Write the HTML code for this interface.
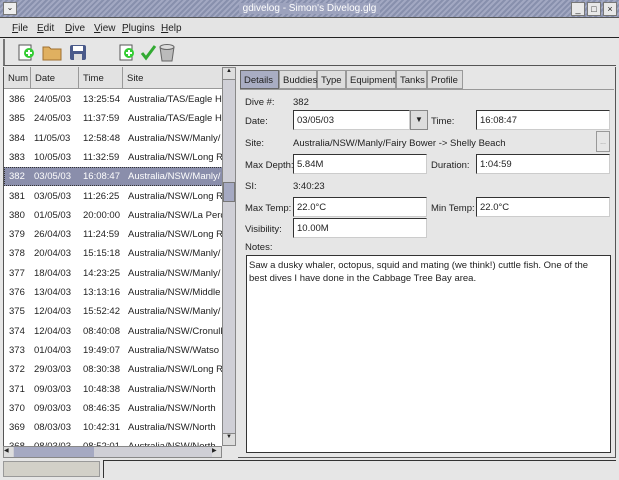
<!DOCTYPE html>
<html><head><meta charset="utf-8"><style>
*{margin:0;padding:0;box-sizing:border-box}
body{width:619px;height:480px;background:#e6e6e6;font-family:"Liberation Sans",sans-serif;font-size:9.5px;color:#222;position:relative;overflow:hidden;white-space:nowrap}
.a{position:absolute}
.title{left:0;top:0;width:619px;height:18px;background:repeating-linear-gradient(135deg,#8890ad 0 2px,#a2a8c2 2px 4px);border-bottom:1px solid #555}
.tt{left:0;width:619px;top:3px;text-align:center;font-size:10px;color:#fff}
.tt span{background:#9ca2bd;padding:0 4px}
.wb{top:2px;width:14px;height:14px;background:#e8e8e8;border:1px solid #777;font-size:9px;text-align:center;line-height:12px}
.menu{top:18px;left:0;width:619px;height:20px;border-bottom:1px solid #222;background:#e4e4e4}
.menu span{position:absolute;top:5px;font-size:10px}
.tb{top:39px;left:3px;width:613px;height:27px;border-bottom:1px solid #555;border-left:2px solid #777}
.list{left:3px;top:67px;width:219px;height:379px;background:#fff;border-left:1px solid #555;overflow:hidden}
.hdr{left:0;top:0;height:22px;background:#e2e2e2;border-right:1px solid #999;border-bottom:1px solid #999;padding:6px 0 0 4px;font-size:9.5px}
.row{left:0;width:219px;height:19.3px;font-size:9.5px;overflow:hidden}
.row span{position:absolute;top:4px}
.sel{background:#8a8eab;color:#fff;outline:1px dotted #333;outline-offset:-1px}
.vs{left:222px;top:67px;width:14px;height:379px;background:#cfcfd6;border:1px solid #888}
.lbl{font-size:9.5px}
.inp{background:#fff;border:1px solid #333;border-right-color:#ccc;border-bottom-color:#ccc;height:20px;padding:4px 0 0 3px;font-size:9.5px}
.tab{top:70px;height:19px;border:1px solid #999;background:#ddd;font-size:9.5px;padding:4px 0 0 3px}
</style></head><body>
<div class="a title"></div>
<div class="a" style="left:3px;top:2px;width:14px;height:13px;background:#eee;border:1px solid #777;font-size:8px;text-align:center">⌄</div>
<div class="a tt"><span>gdivelog - Simon's Divelog.glg</span></div>
<div class="a wb" style="left:571px">_</div><div class="a wb" style="left:587px">□</div><div class="a wb" style="left:603px">×</div>
<div class="a menu"><span style="left:12px"><u>F</u>ile</span><span style="left:37px"><u>E</u>dit</span><span style="left:65px"><u>D</u>ive</span><span style="left:94px"><u>V</u>iew</span><span style="left:122px"><u>P</u>lugins</span><span style="left:161px"><u>H</u>elp</span></div>
<div class="a tb"></div>
<svg class="a" style="left:15px;top:41px" width="170" height="22">
<path d="M4 4h12v15H4z" fill="#fff" stroke="#555"/><circle cx="14" cy="12" r="5" fill="#3c3"/><path d="M11 12h6M14 9v6" stroke="#fff" stroke-width="2"/>
<path d="M28 6h6l2 2h10v11H28z" fill="#e0b060" stroke="#a07030"/>
<rect x="55" y="4" width="16" height="15" rx="2" fill="#4a5a8a"/><rect x="58" y="5" width="10" height="5" fill="#fff"/><rect x="59" y="13" width="8" height="6" fill="#ddd"/>
<path d="M105 4h12v15h-12z" fill="#fff" stroke="#555"/><circle cx="114" cy="12" r="5" fill="#3c3"/><path d="M111 12h6M114 9v6" stroke="#fff" stroke-width="2"/>
<path d="M127 12l4 5 9-12" stroke="#3a3" stroke-width="3" fill="none"/>
<path d="M145 6h14l-2 14h-10z" fill="#bbb" stroke="#666"/><ellipse cx="152" cy="6" rx="7" ry="2.5" fill="#ddd" stroke="#666"/>
</svg>
<div class="a list">
<div class="a hdr" style="left:0;width:27px">Num</div>
<div class="a hdr" style="left:27px;width:48px">Date</div>
<div class="a hdr" style="left:75px;width:44px">Time</div>
<div class="a hdr" style="left:119px;width:100px;border-right:none">Site</div>
<div class="a" style="top:23px;left:0;width:219px">
<div class="row a" style="top:0"><span style="left:5px">386</span><span style="left:30px">24/05/03</span><span style="left:79px">13:25:54</span><span style="left:124px">Australia/TAS/Eagle H</span></div>
<div class="row a" style="top:19.3px"><span style="left:5px">385</span><span style="left:30px">24/05/03</span><span style="left:79px">11:37:59</span><span style="left:124px">Australia/TAS/Eagle H</span></div>
<div class="row a" style="top:38.6px"><span style="left:5px">384</span><span style="left:30px">11/05/03</span><span style="left:79px">12:58:48</span><span style="left:124px">Australia/NSW/Manly/</span></div>
<div class="row a" style="top:57.9px"><span style="left:5px">383</span><span style="left:30px">10/05/03</span><span style="left:79px">11:32:59</span><span style="left:124px">Australia/NSW/Long R</span></div>
<div class="row a sel" style="top:77.2px"><span style="left:5px">382</span><span style="left:30px">03/05/03</span><span style="left:79px">16:08:47</span><span style="left:124px">Australia/NSW/Manly/</span></div>
<div class="row a" style="top:96.5px"><span style="left:5px">381</span><span style="left:30px">03/05/03</span><span style="left:79px">11:26:25</span><span style="left:124px">Australia/NSW/Long R</span></div>
<div class="row a" style="top:115.8px"><span style="left:5px">380</span><span style="left:30px">01/05/03</span><span style="left:79px">20:00:00</span><span style="left:124px">Australia/NSW/La Perc</span></div>
<div class="row a" style="top:135.1px"><span style="left:5px">379</span><span style="left:30px">26/04/03</span><span style="left:79px">11:24:59</span><span style="left:124px">Australia/NSW/Long R</span></div>
<div class="row a" style="top:154.4px"><span style="left:5px">378</span><span style="left:30px">20/04/03</span><span style="left:79px">15:15:18</span><span style="left:124px">Australia/NSW/Manly/</span></div>
<div class="row a" style="top:173.7px"><span style="left:5px">377</span><span style="left:30px">18/04/03</span><span style="left:79px">14:23:25</span><span style="left:124px">Australia/NSW/Manly/</span></div>
<div class="row a" style="top:193px"><span style="left:5px">376</span><span style="left:30px">13/04/03</span><span style="left:79px">13:13:16</span><span style="left:124px">Australia/NSW/Middle</span></div>
<div class="row a" style="top:212.3px"><span style="left:5px">375</span><span style="left:30px">12/04/03</span><span style="left:79px">15:52:42</span><span style="left:124px">Australia/NSW/Manly/</span></div>
<div class="row a" style="top:231.6px"><span style="left:5px">374</span><span style="left:30px">12/04/03</span><span style="left:79px">08:40:08</span><span style="left:124px">Australia/NSW/Cronull</span></div>
<div class="row a" style="top:250.9px"><span style="left:5px">373</span><span style="left:30px">01/04/03</span><span style="left:79px">19:49:07</span><span style="left:124px">Australia/NSW/Watso</span></div>
<div class="row a" style="top:270.2px"><span style="left:5px">372</span><span style="left:30px">29/03/03</span><span style="left:79px">08:30:38</span><span style="left:124px">Australia/NSW/Long R</span></div>
<div class="row a" style="top:289.5px"><span style="left:5px">371</span><span style="left:30px">09/03/03</span><span style="left:79px">10:48:38</span><span style="left:124px">Australia/NSW/North</span></div>
<div class="row a" style="top:308.8px"><span style="left:5px">370</span><span style="left:30px">09/03/03</span><span style="left:79px">08:46:35</span><span style="left:124px">Australia/NSW/North</span></div>
<div class="row a" style="top:328.1px"><span style="left:5px">369</span><span style="left:30px">08/03/03</span><span style="left:79px">10:42:31</span><span style="left:124px">Australia/NSW/North</span></div>
<div class="row a" style="top:347.4px"><span style="left:5px">368</span><span style="left:30px">08/03/03</span><span style="left:79px">08:52:01</span><span style="left:124px">Australia/NSW/North</span></div>
<div class="row a" style="top:366.7px"><span style="left:5px">367</span><span style="left:30px">02/03/03</span><span style="left:79px">11:47:46</span><span style="left:124px">Australia/NSW/Terrig</span></div>
</div></div>
<div class="a vs"><div class="a" style="left:0;top:0;width:12px;height:12px;background:#ddd;border-bottom:1px solid #888;font-size:6px;text-align:center">▲</div><div class="a" style="left:0;top:114px;width:12px;height:20px;background:#a5a9c2;border:1px solid #777"></div><div class="a" style="left:0;bottom:0;width:12px;height:12px;background:#ddd;border-top:1px solid #888;font-size:6px;text-align:center">▼</div></div>
<div class="a" style="left:3px;top:446px;width:219px;height:12px;background:#cfcfd6;border:1px solid #888"><div class="a" style="left:10px;top:0;width:80px;height:10px;background:#a5a9c2"></div><div class="a" style="left:0;top:0;width:9px;height:10px;background:#ddd;font-size:6px">◀</div><div class="a" style="right:0;top:0;width:9px;height:10px;background:#ddd;font-size:6px">▶</div></div>
<div class="a" style="left:238px;top:67px;width:378px;height:391px;border-right:1px solid #555;border-bottom:1px solid #555"></div>
<div class="a tab" style="left:240px;width:39px;background:#a9adc3;border-color:#666">Details</div>
<div class="a tab" style="left:279px;width:38px">Buddies</div>
<div class="a tab" style="left:317px;width:29px">Type</div>
<div class="a tab" style="left:346px;width:50px">Equipment</div>
<div class="a tab" style="left:396px;width:31px">Tanks</div>
<div class="a tab" style="left:427px;width:36px">Profile</div>
<div class="a" style="left:240px;top:89px;width:374px;height:1px;background:#999"></div>
<div class="a lbl" style="left:245px;top:97px">Dive #:</div><div class="a lbl" style="left:293px;top:97px">382</div>
<div class="a lbl" style="left:245px;top:116px">Date:</div><div class="a inp" style="left:293px;top:110px;width:117px">03/05/03</div>
<div class="a" style="left:410px;top:110px;width:18px;height:20px;background:#ddd;border:1px solid #888;font-size:8px;text-align:center;line-height:18px">▼</div>
<div class="a lbl" style="left:431px;top:116px">Time:</div><div class="a inp" style="left:476px;top:110px;width:134px">16:08:47</div>
<div class="a lbl" style="left:245px;top:138px">Site:</div><div class="a lbl" style="left:293px;top:138px">Australia/NSW/Manly/Fairy Bower -&gt; Shelly Beach</div>
<div class="a" style="left:596px;top:131px;width:14px;height:21px;background:#e6e6e6;border:1px solid #999;font-size:7px;text-align:center;line-height:22px;color:#888">...</div>
<div class="a lbl" style="left:245px;top:160px">Max Depth:</div><div class="a inp" style="left:293px;top:154px;width:134px">5.84M</div>
<div class="a lbl" style="left:431px;top:160px">Duration:</div><div class="a inp" style="left:476px;top:154px;width:134px">1:04:59</div>
<div class="a lbl" style="left:245px;top:181px">SI:</div><div class="a lbl" style="left:293px;top:181px">3:40:23</div>
<div class="a lbl" style="left:245px;top:203px">Max Temp:</div><div class="a inp" style="left:293px;top:197px;width:134px">22.0°C</div>
<div class="a lbl" style="left:431px;top:203px">Min Temp:</div><div class="a inp" style="left:476px;top:197px;width:134px">22.0°C</div>
<div class="a lbl" style="left:245px;top:224px">Visibility:</div><div class="a inp" style="left:293px;top:218px;width:134px">10.00M</div>
<div class="a lbl" style="left:245px;top:242px">Notes:</div>
<div class="a" style="left:246px;top:255px;width:365px;height:198px;background:#fff;border:1px solid #333;padding:3px 2px;font-size:9.5px;line-height:13px;white-space:normal">Saw a dusky whaler, octopus, squid and mating (we think!) cuttle fish. One of the best dives I have done in the Cabbage Tree Bay area.</div>
<div class="a" style="left:3px;top:461px;width:97px;height:16px;background:#d2d0c8;border:1px solid #999"></div>
<div class="a" style="left:103px;top:460px;width:513px;height:18px;border-top:1px solid #333;border-left:1px solid #333;background:#e6e6e6"></div>
</body></html>
